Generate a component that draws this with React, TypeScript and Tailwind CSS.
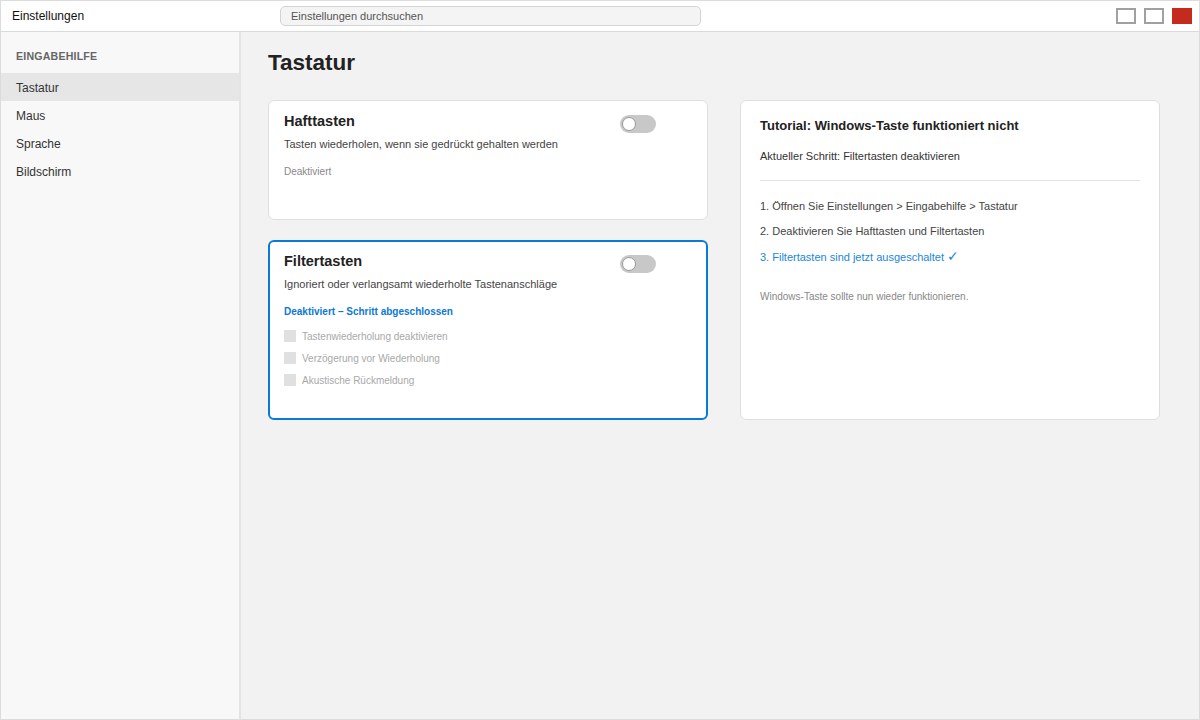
import { useState } from 'react';

const NAV = ['Tastatur', 'Maus', 'Sprache', 'Bildschirm'];

const FILTER_OPTIONS = [
  'Tastenwiederholung deaktivieren',
  'Verzögerung vor Wiederholung',
  'Akustische Rückmeldung',
];

function Toggle({ on = false }: { on?: boolean }) {
  return (
    <span
      className={`relative inline-flex h-[18px] w-[36px] shrink-0 items-center rounded-full ${
        on ? 'bg-[#0078d4]' : 'bg-[#c8c8c8]'
      }`}
    >
      <span
        className={`absolute top-[2px] h-[14px] w-[14px] rounded-full border border-[#9a9a9a] bg-white ${
          on ? 'left-[20px]' : 'left-[2px]'
        }`}
      />
    </span>
  );
}

function CardHeader({ title }: { title: string }) {
  return (
    <div className="flex h-[20px] items-start justify-between pr-[36px]">
      <h2 className="text-[14.5px] font-bold leading-[20px] text-[#222]">{title}</h2>
      <span className="mt-[4px]">
        <Toggle />
      </span>
    </div>
  );
}

export default function App() {
  const [active] = useState('Tastatur');

  return (
    <div
      className="flex h-[720px] w-[1200px] flex-col overflow-hidden border border-[#dcdcdc] bg-[#f2f2f2] text-[#222]"
      style={{ fontFamily: '"Liberation Sans", Arial, sans-serif' }}
    >
      {/* title bar */}
      <header className="flex h-[31px] shrink-0 items-center border-b border-[#dadada] bg-white pl-[11px] pr-[7px]">
        <span className="w-[268px] text-[12px] text-[#111]">Einstellungen</span>
        <div className="flex h-[20px] w-[421px] items-center rounded-[5px] border border-[#d4d4d4] bg-[#f4f4f4] px-[10px] text-[11px] text-[#555]">
          Einstellungen durchsuchen
        </div>
        <div className="ml-auto flex items-center gap-[8px]">
          <span className="h-[16px] w-[20px] border-2 border-[#a0a0a0] bg-white" />
          <span className="h-[16px] w-[20px] border-2 border-[#a0a0a0] bg-white" />
          <span className="h-[16px] w-[20px] bg-[#c42b1c]" />
        </div>
      </header>

      <div className="flex min-h-0 flex-1">
        {/* sidebar */}
        <aside className="w-[240px] shrink-0 border-r-2 border-[#e4e4e4] bg-[#f8f8f8] pt-[17px]">
          <div className="px-[15px] pb-[8px] text-[10.6px] font-bold tracking-[0.2px] text-[#666]">
            EINGABEHILFE
          </div>
          <nav className="flex flex-col">
            {NAV.map((item) => (
              <div
                key={item}
                className={`flex h-[28px] items-center px-[15px] pt-[2px] text-[12px] text-[#333] ${
                  item === active ? 'bg-[#e6e6e6]' : ''
                }`}
              >
                {item}
              </div>
            ))}
          </nav>
        </aside>

        {/* content */}
        <main className="flex-1 pl-[27px] pr-[39px] pt-[17px]">
          <h1 className="text-[22.5px] font-bold leading-[28px] text-[#222]">Tastatur</h1>

          <div className="mt-[23px] flex gap-[32px]">
            <div className="flex w-[440px] flex-col gap-[20px]">
              <section className="h-[120px] rounded-[6px] border border-[#dedede] bg-white px-[15px] pt-[10px]">
                <CardHeader title="Hafttasten" />
                <p className="mt-[6px] text-[11px] leading-[14px] text-[#444]">
                  Tasten wiederholen, wenn sie gedrückt gehalten werden
                </p>
                <p className="mt-[15px] text-[10px] leading-[12px] text-[#888]">Deaktiviert</p>
              </section>

              <section className="h-[180px] rounded-[6px] border-2 border-[#0a7bd4] bg-white px-[14px] pt-[9px]">
                <CardHeader title="Filtertasten" />
                <p className="mt-[6px] text-[11px] leading-[14px] text-[#444]">
                  Ignoriert oder verlangsamt wiederholte Tastenanschläge
                </p>
                <p className="mt-[15px] text-[10px] font-bold leading-[12px] text-[#0a78d8]">
                  Deaktiviert – Schritt abgeschlossen
                </p>
                <ul className="mt-[11px] flex flex-col gap-[8px]">
                  {FILTER_OPTIONS.map((opt) => (
                    <li key={opt} className="flex h-[14px] items-center gap-[6px]">
                      <span className="h-[12px] w-[12px] bg-[#e0e0e0]" />
                      <span className="text-[10px] text-[#a8a8a8]">{opt}</span>
                    </li>
                  ))}
                </ul>
              </section>
            </div>

            <section className="h-[320px] w-[420px] rounded-[6px] border border-[#dedede] bg-white px-[19px] pt-[16px]">
              <h2 className="text-[13px] font-bold leading-[18px] text-[#222]">
                Tutorial: Windows-Taste funktioniert nicht
              </h2>
              <p className="mt-[14px] text-[11px] leading-[14px] text-[#333]">
                Aktueller Schritt: Filtertasten deaktivieren
              </p>
              <div className="mt-[17px] border-t border-[#e2e2e2]" />
              <ol className="mt-[18px] flex flex-col gap-[10px] text-[11px] leading-[15px] text-[#444]">
                <li>1. Öffnen Sie Einstellungen &gt; Eingabehilfe &gt; Tastatur</li>
                <li>2. Deaktivieren Sie Hafttasten und Filtertasten</li>
                <li className="text-[#1a86dc]">
                  3. Filtertasten sind jetzt ausgeschaltet{' '}
                  <span className="text-[14px] leading-[15px]">✓</span>
                </li>
              </ol>
              <p className="mt-[24px] text-[10px] text-[#888]">
                Windows-Taste sollte nun wieder funktionieren.
              </p>
            </section>
          </div>
        </main>
      </div>
    </div>
  );
}
